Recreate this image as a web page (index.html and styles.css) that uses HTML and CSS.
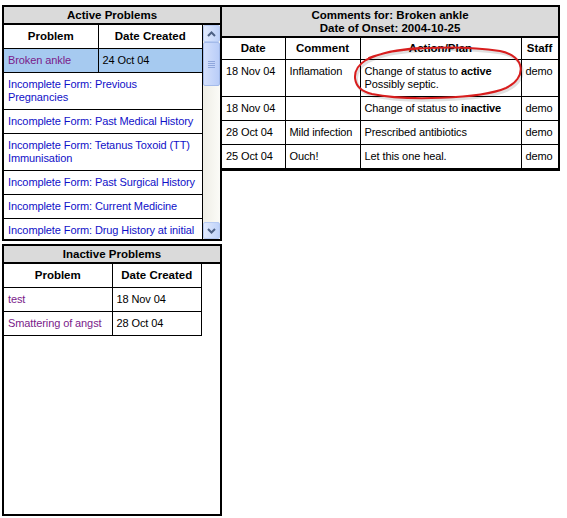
FILE: index.html
```html
<!DOCTYPE html>
<html>
<head>
<meta charset="utf-8">
<link rel="stylesheet" href="styles.css">
</head>
<body>
<div class="page">
  <div class="left">
    <section class="box active">
      <div class="box-title">Active Problems</div>
      <div class="scroll">
        <div class="scroll-body">
          <table class="grid">
            <colgroup><col class="c-prob"><col></colgroup>
            <tr><th>Problem</th><th>Date Created</th></tr>
            <tr class="sel"><td><a class="visited" href="#">Broken ankle</a></td><td>24 Oct 04</td></tr>
            <tr><td colspan="2"><a href="#">Incomplete Form: Previous Pregnancies</a></td></tr>
            <tr><td colspan="2"><a href="#">Incomplete Form: Past Medical History</a></td></tr>
            <tr><td colspan="2"><a href="#">Incomplete Form: Tetanus Toxoid (TT) Immunisation</a></td></tr>
            <tr><td colspan="2"><a href="#">Incomplete Form: Past Surgical History</a></td></tr>
            <tr><td colspan="2"><a href="#">Incomplete Form: Current Medicine</a></td></tr>
            <tr><td colspan="2"><a href="#">Incomplete Form: Drug History at initial visit</a></td></tr>
          </table>
        </div>
        <div class="sb">
          <div class="sb-btn"><svg width="9" height="6" viewBox="0 0 9 6"><polyline points="1,5 4.5,1.5 8,5" fill="none" stroke="#4d6185" stroke-width="2"/></svg></div>
          <div class="sb-track">
            <div class="sb-thumb"><span class="grip"></span></div>
          </div>
          <div class="sb-btn"><svg width="9" height="6" viewBox="0 0 9 6"><polyline points="1,1 4.5,4.5 8,1" fill="none" stroke="#4d6185" stroke-width="2"/></svg></div>
        </div>
      </div>
    </section>
    <section class="box inactive">
      <div class="box-title">Inactive Problems</div>
      <table class="grid narrow">
        <colgroup><col class="c-prob2"><col></colgroup>
        <tr><th>Problem</th><th>Date Created</th></tr>
        <tr><td><a class="visited" href="#">test</a></td><td>18 Nov 04</td></tr>
        <tr><td><a class="visited" href="#">Smattering of angst</a></td><td>28 Oct 04</td></tr>
      </table>
    </section>
  </div>
  <section class="box comments">
    <div class="box-title two">Comments for: Broken ankle<br>Date of Onset: 2004-10-25</div>
    <table class="grid ctable">
      <colgroup><col class="c-date"><col class="c-com"><col class="c-act"><col class="c-staff"></colgroup>
      <tr><th>Date</th><th>Comment</th><th>Action/Plan</th><th>Staff</th></tr>
      <tr><td>18 Nov 04</td><td>Inflamation</td><td>Change of status to <b>active</b><br>Possibly septic.</td><td>demo</td></tr>
      <tr><td>18 Nov 04</td><td></td><td>Change of status to <b>inactive</b></td><td>demo</td></tr>
      <tr><td>28 Oct 04</td><td>Mild infection</td><td>Prescribed antibiotics</td><td>demo</td></tr>
      <tr><td>25 Oct 04</td><td>Ouch!</td><td>Let this one heal.</td><td>demo</td></tr>
    </table>
  </section>
  <svg class="annot" width="567" height="110" viewBox="0 0 567 110">
    <path d="M369 58 C392 48 455 44 500 51 C526 56 527 78 506 88 C480 99 405 101 372 94 C351 89 350 70 366 60 C382 52 400 49 420 48" fill="none" stroke="#000" stroke-opacity="0.12" stroke-width="3" transform="translate(1.5 2)"/>
    <path d="M369 58 C392 48 455 44 500 51 C526 56 527 78 506 88 C480 99 405 101 372 94 C351 89 350 70 366 60 C382 52 400 49 420 48" fill="none" stroke="#d81e1e" stroke-width="2" stroke-linecap="round"/>
  </svg>
</div>
</body>
</html>
```

FILE: styles.css
```css
* { box-sizing: border-box; }

body {
  margin: 0;
  background: #fff;
  color: #000;
  font-family: "Liberation Sans", Arial, sans-serif;
  font-size: 11px;
}

.page {
  position: relative;
  display: flex;
  align-items: flex-start;
  padding: 5px 0 0 2px;
}

.left {
  width: 220px;
  display: flex;
  flex-direction: column;
  gap: 3px;
}

.box {
  border: 2px solid #000;
  background: #fff;
}

.box-title {
  background: #dadada;
  border-bottom: 2px solid #000;
  font-weight: bold;
  font-size: 11.5px;
  text-align: center;
  line-height: 16px;
}

.box-title.two {
  line-height: 13px;
  padding: 2px 0 1px;
}

.active { height: 236px; }
.inactive { height: 272px; }

.scroll {
  display: flex;
  height: 214px;
}

.scroll-body {
  width: 199px;
  overflow: hidden;
}

.grid {
  border-collapse: collapse;
  table-layout: fixed;
  width: 100%;
}

.grid td, .grid th {
  border: 1px solid #000;
  padding: 5px 4px;
  line-height: 13px;
  vertical-align: top;
  text-align: left;
  font-weight: normal;
  letter-spacing: -0.1px;
}

.grid th {
  font-weight: bold;
  font-size: 11.5px;
  text-align: center;
  letter-spacing: 0;
}

.grid tr:first-child > * { border-top: 0; }
.grid tr > *:first-child { border-left: 0; }

.c-prob { width: 94px; }
.c-prob2 { width: 108px; }
.narrow { width: 198px; }

.sel td { background: #a6caf0; }

a { color: #1010c8; text-decoration: none; }
a.visited { color: #7a1a8a; }

.sb {
  width: 17px;
  display: flex;
  flex-direction: column;
  background: linear-gradient(to right, #efeee6, #fbfbf7);
}

.sb-btn {
  height: 17px;
  border: 1px solid #b7cbf3;
  border-radius: 2px;
  background: linear-gradient(to right, #e1eafd, #bfd2f9);
  display: flex;
  align-items: center;
  justify-content: center;
}

.sb-track { flex: 1; }

.sb-thumb {
  height: 44px;
  border: 1px solid #a4bbea;
  border-radius: 2px;
  background: linear-gradient(to right, #d4e0fc, #b9cdf8);
  display: flex;
  align-items: center;
  justify-content: center;
}

.grip {
  width: 7px;
  height: 7px;
  background: repeating-linear-gradient(to bottom, #8fa7dc 0 1px, transparent 1px 2px);
}

.comments {
  width: 340px;
  margin-left: -2px;
}

.ctable th { padding: 4px 4px; }

.c-date { width: 63px; }
.c-com { width: 75px; }
.c-act { width: 161px; }
.c-staff { width: 37px; }

.annot {
  position: absolute;
  left: 0;
  top: 0;
  pointer-events: none;
}
```
